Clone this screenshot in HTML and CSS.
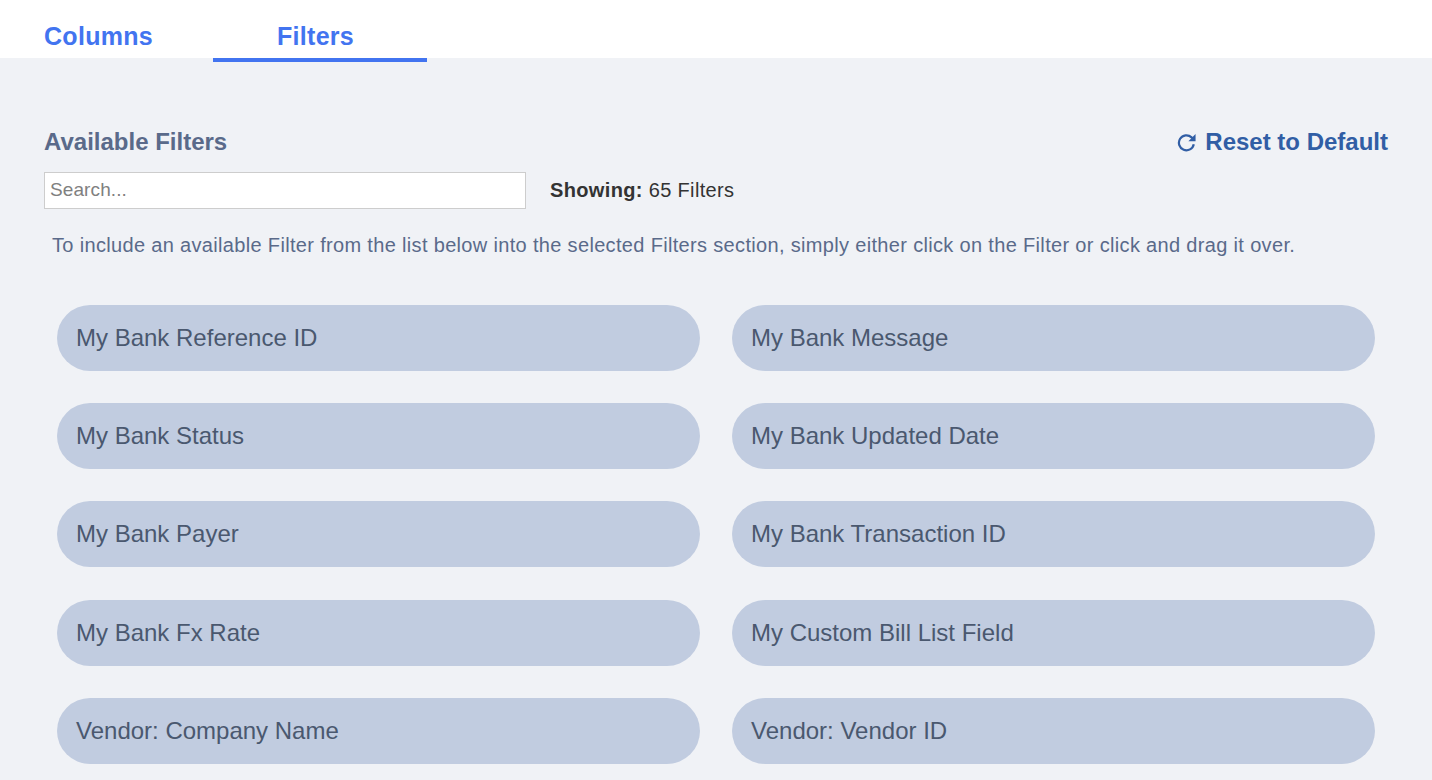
FILE: index.html
```html
<!DOCTYPE html>
<html lang="en">
<head>
<meta charset="utf-8">
<title>Filters</title>
<link rel="stylesheet" href="styles.css">
</head>
<body>
<nav class="tabs">
  <a class="tab tab-columns">Columns</a>
  <a class="tab tab-filters">Filters</a>
</nav>
<main class="panel">
  <div class="head">
    <h2 class="title">Available Filters</h2>
    <a class="reset">
      <svg class="reset-icon" viewBox="0 0 18 18" aria-hidden="true"><path d="M15.9 10.6A7.1 7.1 0 1 1 13.8 4.1L15.4 5.7" fill="none" stroke="currentColor" stroke-width="2.1"/><path d="M17.6 1V7.8H10.8Z" fill="currentColor"/></svg>
      <span>Reset to Default</span>
    </a>
  </div>
  <div class="search-row">
    <input class="search" type="text" placeholder="Search...">
    <p class="showing"><b>Showing:</b> 65 Filters</p>
  </div>
  <p class="hint">To include an available Filter from the list below into the selected Filters section, simply either click on the Filter or click and drag it over.</p>
  <div class="grid">
    <div class="pill">My Bank Reference ID</div>
    <div class="pill">My Bank Message</div>
    <div class="pill">My Bank Status</div>
    <div class="pill">My Bank Updated Date</div>
    <div class="pill">My Bank Payer</div>
    <div class="pill">My Bank Transaction ID</div>
    <div class="pill">My Bank Fx Rate</div>
    <div class="pill">My Custom Bill List Field</div>
    <div class="pill">Vendor: Company Name</div>
    <div class="pill">Vendor: Vendor ID</div>
  </div>
</main>
</body>
</html>
```
FILE: styles.css
```css
* { box-sizing: border-box; }
html, body { margin: 0; height: 100%; overflow: hidden; }
body { background: #f0f2f6; font-family: "Liberation Sans", Arial, sans-serif; }
.tabs { display: flex; height: 58px; background: #fff; padding-left: 44px; }
.tab { color: #4274f0; font-size: 25px; font-weight: 700; line-height: 30px; padding-top: 21px; letter-spacing: 0.3px; }
.tab-columns { width: 169px; }
.tab-filters { width: 214px; height: 62px; text-align: center; border-bottom: 4px solid #4274f0; padding-right: 9px; }
.panel { padding: 68px 44px 0; }
.head { display: flex; justify-content: space-between; align-items: center; height: 32px; }
.title { margin: 0; color: #5a6a8a; font-size: 24px; font-weight: 700; }
.reset { display: flex; align-items: center; gap: 9px; color: #315ea5; font-size: 24px; font-weight: 700; }
.reset-icon { width: 19px; height: 19px; }
.search-row { display: flex; align-items: center; gap: 24px; margin-top: 14px; }
.search { width: 482px; height: 37px; padding: 0 5px 1px; border: 1px solid #cdcdcd; background: #fff; font: 19px "Liberation Sans", Arial, sans-serif; letter-spacing: 0.1px; }
.search::placeholder { color: #808080; opacity: 1; }
.showing { margin: 0; color: #333; font-size: 20px; letter-spacing: 0.35px; }
.hint { margin: 24px 0 0 8px; color: #5a6a8a; font-size: 20px; line-height: 24px; letter-spacing: 0.33px; }
.grid { display: grid; grid-template-columns: 643px 643px; column-gap: 32px; row-gap: 32.25px; margin: 47.75px 0 0 13px; }
.pill { height: 66px; border-radius: 33px; background: #c1cce0; color: #4a586f; font-size: 24px; line-height: 66px; padding-left: 19px; }
```
